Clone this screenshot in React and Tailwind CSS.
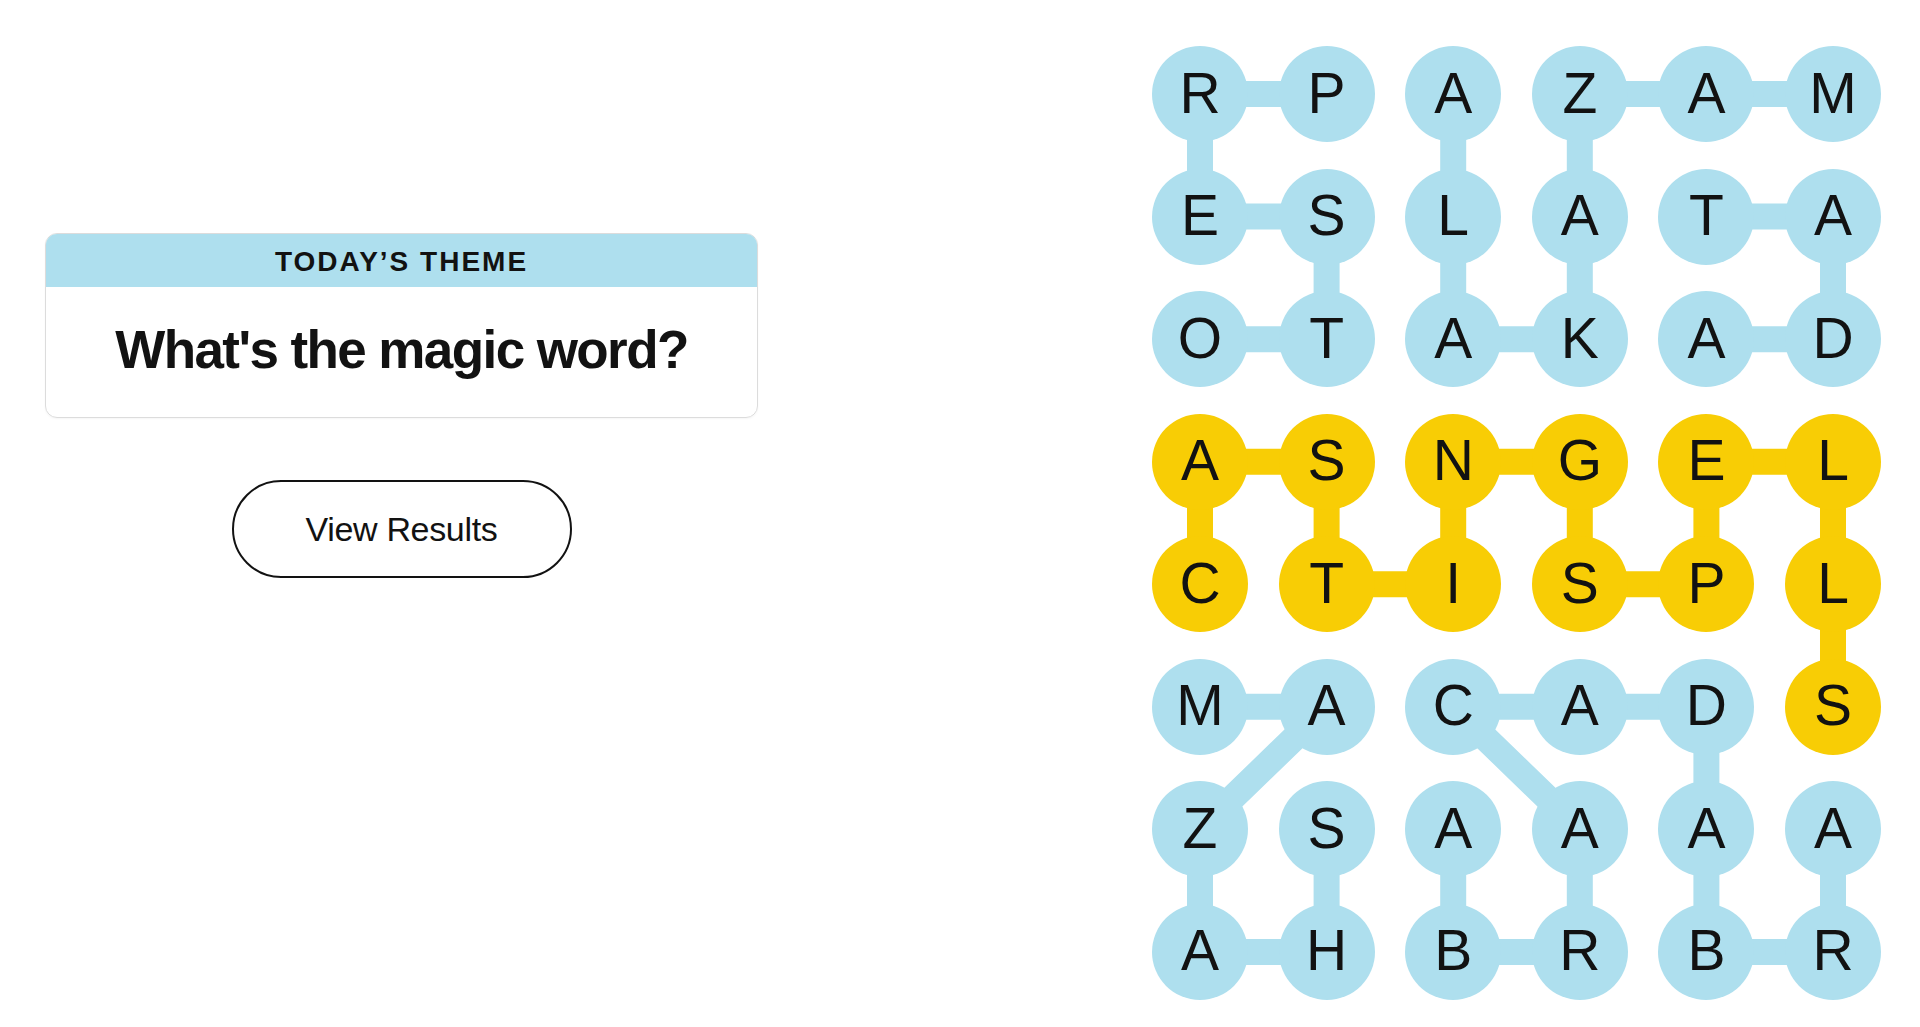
import React from 'react';

const GRID = [
  'RPAZAM',
  'ESLATA',
  'OTAKAD',
  'ASNGEL',
  'CTISPL',
  'MACADS',
  'ZSAAAA',
  'AHBRBR',
];

const BLUE = '#aedfee';
const YELLOW = '#f8cd05';

// chemins des mots trouvés, en [ligne, colonne]
const WORDS = [
  { color: BLUE, cells: [[0, 1], [0, 0], [1, 0], [1, 1], [2, 1], [2, 0]] },
  { color: BLUE, cells: [[0, 2], [1, 2], [2, 2], [2, 3], [1, 3], [0, 3], [0, 4], [0, 5]] },
  { color: BLUE, cells: [[1, 4], [1, 5], [2, 5], [2, 4]] },
  {
    color: YELLOW,
    cells: [[4, 0], [3, 0], [3, 1], [4, 1], [4, 2], [3, 2], [3, 3], [4, 3], [4, 4], [3, 4], [3, 5], [4, 5], [5, 5]],
  },
  { color: BLUE, cells: [[6, 1], [7, 1], [7, 0], [6, 0], [5, 1], [5, 0]] },
  {
    color: BLUE,
    cells: [[6, 2], [7, 2], [7, 3], [6, 3], [5, 2], [5, 3], [5, 4], [6, 4], [7, 4], [7, 5], [6, 5]],
  },
];

const SIZE = 96;
const PX = 126.6;
const PY = 122.57;
const W = SIZE + PX * 5;
const H = SIZE + PY * 7;

const estJaune = (r, c) => r === 3 || r === 4 || (r === 5 && c === 5);

function Board() {
  return (
    <div className="relative">
      <svg className="absolute inset-0" width={W} height={H} viewBox={`0 0 ${W} ${H}`}>
        {WORDS.map((w, i) => (
          <polyline
            key={i}
            points={w.cells.map(([r, c]) => `${SIZE / 2 + c * PX},${SIZE / 2 + r * PY}`).join(' ')}
            fill="none"
            stroke={w.color}
            strokeWidth="26"
            strokeLinejoin="round"
          />
        ))}
      </svg>
      <div className="relative grid grid-cols-[repeat(6,96px)] auto-rows-[96px] gap-x-[30.6px] gap-y-[26.57px]">
        {GRID.map((row, r) =>
          row.split('').map((ch, c) => (
            <div
              key={`${r}-${c}`}
              className={`w-[96px] h-[96px] rounded-full flex items-center justify-center text-[57px] leading-none text-[#121212] pb-[2px] ${
                estJaune(r, c) ? 'bg-[#f8cd05]' : 'bg-[#aedfee]'
              }`}
            >
              {ch}
            </div>
          ))
        )}
      </div>
    </div>
  );
}

export default function App() {
  return (
    <div className="w-[1920px] h-[1027px] bg-white flex justify-between pl-[45px] pr-[39px] font-['Liberation_Sans',Arial,sans-serif] overflow-hidden">
      <div className="pt-[233px] w-[713px] flex flex-col items-center">
        <div className="w-full rounded-[12px] border border-[#dcdcdc] overflow-hidden shadow-[0_1px_2px_rgba(0,0,0,0.04)]">
          <div className="h-[53px] bg-[#aedfee] flex items-center justify-center">
            <span className="text-[28px] font-bold tracking-[2px] text-[#121212] leading-none pt-[3px]">
              TODAY’S THEME
            </span>
          </div>
          <div className="h-[130px] flex items-center justify-center">
            <h2 className="text-[53px] font-bold tracking-[-0.03em] text-[#121212] leading-none pb-[6px]">
              What's the magic word?
            </h2>
          </div>
        </div>
        <button className="mt-[62px] w-[340px] h-[98px] rounded-full border-2 border-[#121212] bg-white text-[34px] tracking-[-0.01em] text-[#121212] flex items-center justify-center">
          View Results
        </button>
      </div>
      <div className="pt-[46px]">
        <Board />
      </div>
    </div>
  );
}
